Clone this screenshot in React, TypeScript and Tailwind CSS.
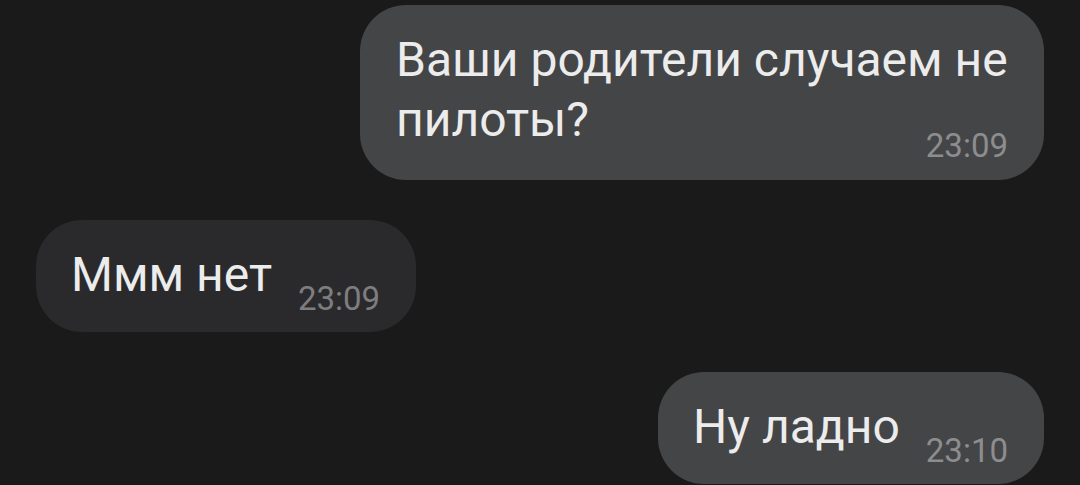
import React from 'react';

interface Message {
  id: number;
  text: string;
  time: string;
  mine: boolean;
  wrapped?: boolean;
}

const messages: Message[] = [
  { id: 1, text: 'Ваши родители случаем не пилоты?', time: '23:09', mine: true, wrapped: true },
  { id: 2, text: 'Ммм нет', time: '23:09', mine: false },
  { id: 3, text: 'Ну ладно', time: '23:10', mine: true },
];

const Bubble: React.FC<{ msg: Message }> = ({ msg }) => {
  const bg = msg.mine ? 'bg-[#444547]' : 'bg-[#2a2a2c]';
  const timeColor = msg.mine ? 'text-[#8d8d8f]' : 'text-[#7e7e80]';

  // multi-line bubble: time sits under the last line, right aligned
  if (msg.wrapped) {
    return (
      <div className={`flex max-w-[684px] flex-col rounded-[46px] pt-[25px] pr-[36px] pb-[18px] pl-[36px] ${bg}`}>
        <p className="text-[48px] leading-[60px] text-[#ececec]">{msg.text}</p>
        <span className={`-mt-[20px] self-end text-[33px] leading-8 ${timeColor}`}>{msg.time}</span>
      </div>
    );
  }

  return (
    <div className={`flex items-end gap-[26px] rounded-[46px] pt-[25px] pr-[36px] pb-[17px] pl-[35px] ${bg}`}>
      <p className="pb-[10px] text-[48px] leading-[60px] text-[#ececec]">{msg.text}</p>
      <span className={`text-[33px] leading-8 ${timeColor}`}>{msg.time}</span>
    </div>
  );
};

export default function App() {
  return (
    <div
      className="flex h-[485px] w-[1080px] flex-col gap-10 overflow-hidden bg-[#1a1a1a] px-9 pt-[5px]"
      style={{ fontFamily: 'Roboto, "Noto Sans", sans-serif' }}
    >
      {messages.map((msg) => (
        <div key={msg.id} className={`flex ${msg.mine ? 'justify-end' : 'justify-start'}`}>
          <Bubble msg={msg} />
        </div>
      ))}
    </div>
  );
}
